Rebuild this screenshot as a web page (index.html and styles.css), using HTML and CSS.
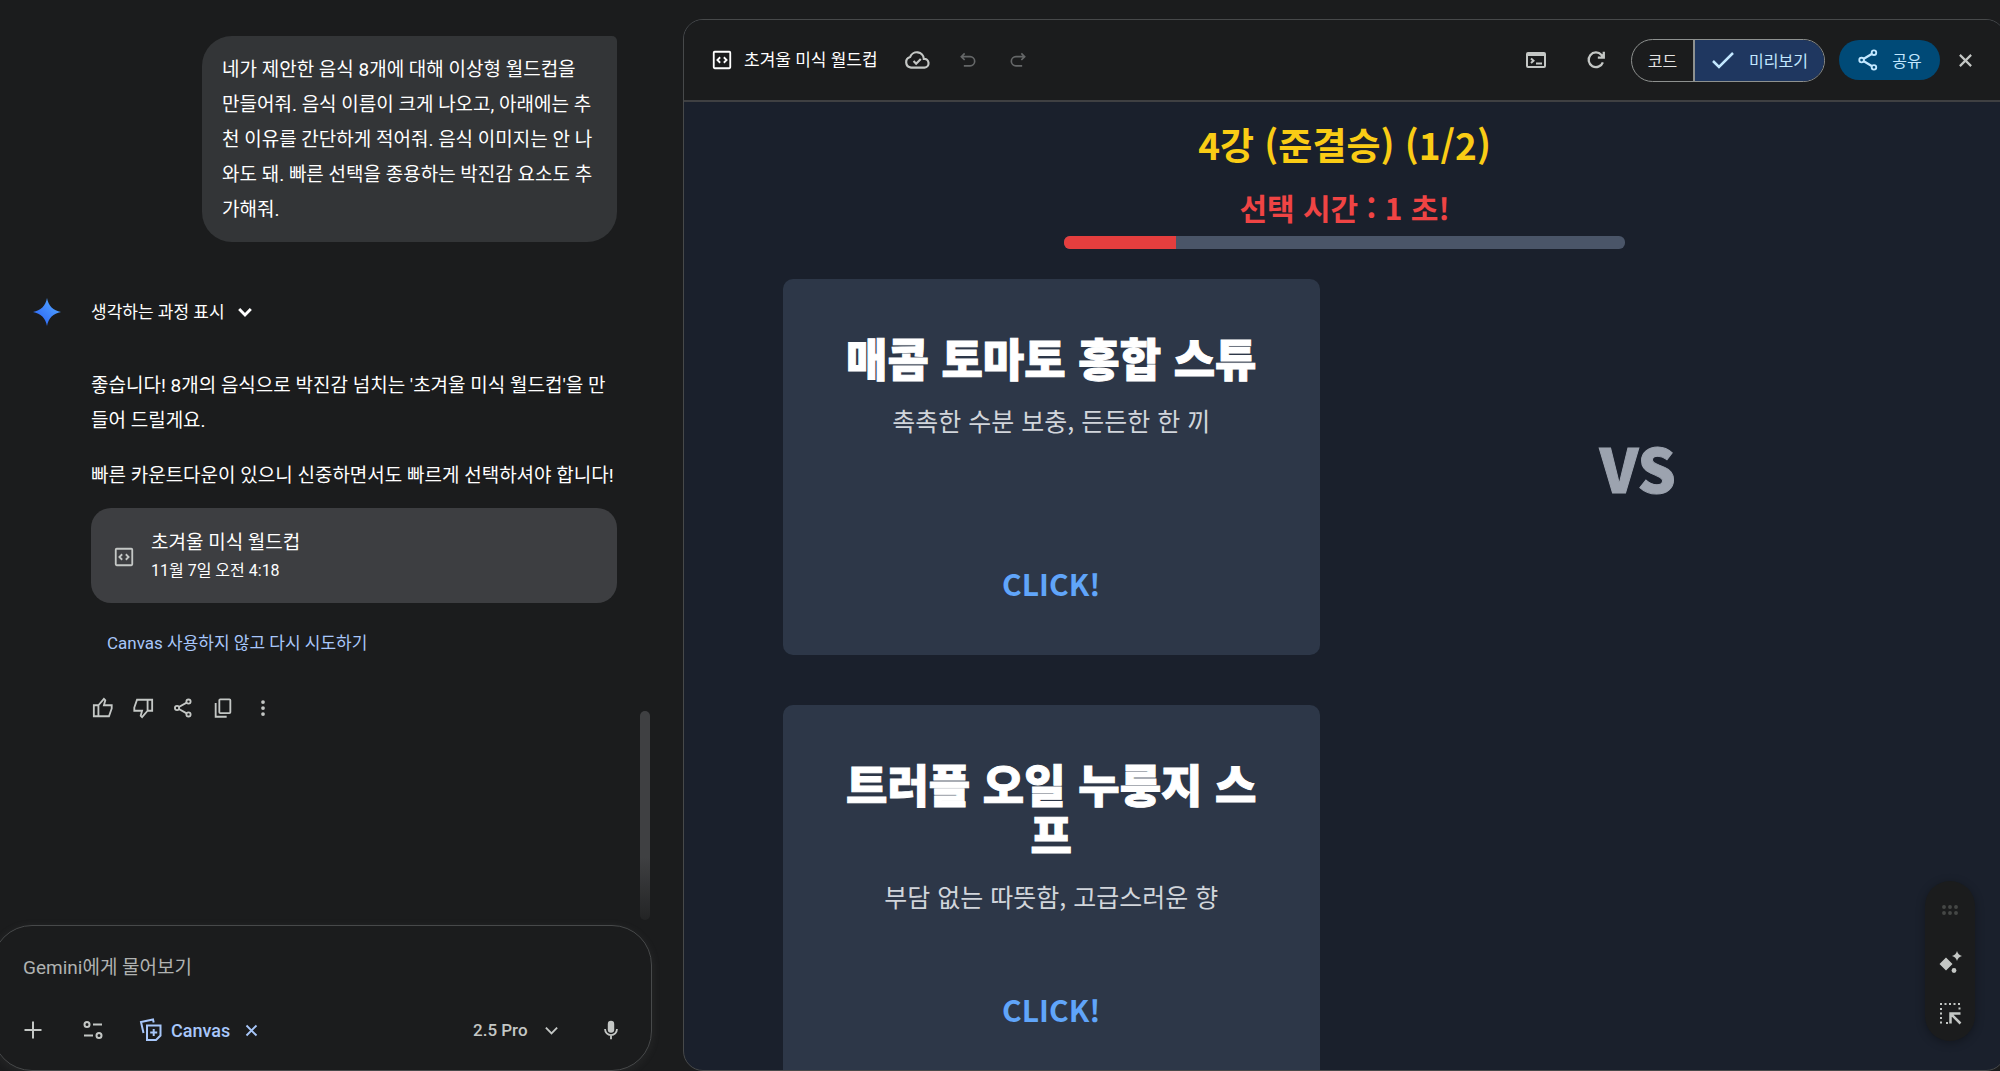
FILE: index.html
```html
<!DOCTYPE html>
<html lang="ko">
<head>
    <meta charset="UTF-8">
    <meta name="viewport" content="width=device-width, initial-scale=1.0">
    <title>초겨울 미식 월드컵</title>
    <link rel="stylesheet" href="styles.css">
</head>
<body>
    <main class="chat">
        <div class="messages">
            <p class="bubble">네가 제안한 음식 8개에 대해 이상형 월드컵을<br>만들어줘. 음식 이름이 크게 나오고, 아래에는 추<br>천 이유를 간단하게 적어줘. 음식 이미지는 안 나<br>와도 돼. 빠른 선택을 종용하는 박진감 요소도 추<br>가해줘.</p>
            <div class="answer">
                <svg class="star" viewBox="0 0 28 28">
                    <defs>
                        <linearGradient id="blue" x1="0" y1="1" x2="1" y2="0">
                            <stop offset="0.2" stop-color="#2f6bf6"/>
                            <stop offset="0.8" stop-color="#4f9fff"/>
                        </linearGradient>
                    </defs>
                    <path fill="url(#blue)" d="M14 0c1.300 7.700 6.300 12.700 14 14-7.700 1.300-12.700 6.300-14 14-1.300-7.700-6.300-12.700-14-14C7.700 12.700 12.700 7.700 14 0z"/>
                </svg>
                <div class="content">
                    <button class="thinking">생각하는 과정 표시
                        <svg class="icon" viewBox="0 0 24 24"><path stroke-width="3.500" d="M5 8.500l7 7 7-7"/></svg>
                    </button>
                    <p>좋습니다! 8개의 음식으로 박진감 넘치는 '초겨울 미식 월드컵'을 만<br>들어 드릴게요.</p>
                    <p>빠른 카운트다운이 있으니 신중하면서도 빠르게 선택하셔야 합니다!</p>
                    <button class="file">
                        <svg class="icon" viewBox="0 0 24 24"><rect x="3" y="3" width="18" height="18" rx="1"/><path d="M10 9l-3 3 3 3M14 9l3 3-3 3"/></svg>
                        <span>
                            <span class="file-name">초겨울 미식 월드컵</span>
                            <span class="file-date">11월 7일 오전 4:18</span>
                        </span>
                    </button>
                    <a class="retry" href="#">Canvas 사용하지 않고 다시 시도하기</a>
                    <div class="actions">
                        <button aria-label="좋아요"><svg class="icon" viewBox="0 0 24 24"><path d="M2 9h5v12H2zM7 9l6-7 1.500 1.500L13 9h8.500v3.500L18.500 21H7"/></svg></button>
                        <button aria-label="싫어요"><svg class="icon" viewBox="0 0 24 24"><path d="M22 15h-5V3h5zM17 15l-6 7-1.500-1.500L11 15H2.500v-3.500L5.500 3H17"/></svg></button>
                        <button aria-label="공유"><svg class="icon" viewBox="0 0 24 24"><circle cx="18" cy="5" r="2.300"/><circle cx="5.500" cy="12" r="2.300"/><circle cx="18" cy="19" r="2.300"/><path d="M7.500 10.900l8.500-4.800M7.500 13.100l8.500 4.800"/></svg></button>
                        <button aria-label="복사"><svg class="icon" viewBox="0 0 24 24"><rect x="8" y="2.500" width="12" height="15" rx="1"/><path d="M4 6.500v15h12"/></svg></button>
                        <button aria-label="더보기"><svg class="icon solid" viewBox="0 0 24 24"><circle cx="12" cy="4" r="2.500"/><circle cx="12" cy="12" r="2.500"/><circle cx="12" cy="20" r="2.500"/></svg></button>
                    </div>
                </div>
            </div>
            <div class="scrollbar"></div>
        </div>
        <form class="composer">
            <input class="prompt" type="text" aria-label="프롬프트" placeholder="Gemini에게 물어보기">
            <div class="tools">
                <button type="button" aria-label="추가"><svg class="icon big" viewBox="0 0 24 24"><path d="M12 3.500v17M3.500 12h17"/></svg></button>
                <button type="button" aria-label="도구"><svg class="icon big" viewBox="0 0 24 24"><circle cx="6" cy="6.500" r="2.500"/><path d="M12 6.500h9M3 17.500h9"/><circle cx="18" cy="17.500" r="2.500"/></svg></button>
                <button type="button" class="chip">
                    <svg class="icon big" viewBox="0 0 24 24"><path d="M4.500 15L2 4l12-2.500.7 3M8 7.500h13.500v10L17 22H8zM14.700 11v7M11.200 14.500h7"/></svg>
                    Canvas
                    <svg class="icon small" viewBox="0 0 24 24"><path stroke-width="3" d="M4 4l16 16M20 4L4 20"/></svg>
                </button>
                <label class="model">
                    <select aria-label="모델"><option>2.5 Pro</option></select>
                    <svg class="icon small" viewBox="0 0 24 24"><path stroke-width="3" d="M3 7.500l9 9 9-9"/></svg>
                </label>
                <button type="button" aria-label="마이크"><svg class="icon" viewBox="0 0 24 24"><rect x="8.500" y="2" width="7" height="13" rx="3.500" fill="currentColor" stroke="none"/><path d="M5.500 11a6.500 6.500 0 0 0 13 0M12 17v5"/></svg></button>
            </div>
        </form>
    </main>

    <section class="canvas">
        <header class="toolbar">
            <svg class="icon code" viewBox="0 0 24 24"><rect x="3" y="3" width="18" height="18" rx="1"/><path d="M10 9l-3 3 3 3M14 9l3 3-3 3"/></svg>
            <h2>초겨울 미식 월드컵</h2>
            <svg class="icon cloud" viewBox="0 0 24 24"><path d="M6.500 19A5 5 0 0 1 5.700 9.200 6.500 6.500 0 0 1 18.300 11 4 4 0 0 1 19 19zM8.800 13l2.400 2.400 4.300-4.300"/></svg>
            <button class="off" aria-label="실행 취소" disabled><svg class="icon" viewBox="0 0 24 24"><path d="M8 4L4 8l4 4M4 8h10.500a5.500 5.500 0 0 1 0 11H7"/></svg></button>
            <button class="off" aria-label="다시 실행" disabled><svg class="icon" viewBox="0 0 24 24"><path d="M16 4l4 4-4 4M20 8H9.500a5.500 5.500 0 0 0 0 11H17"/></svg></button>
            <div class="spacer"></div>
            <button aria-label="콘솔"><svg class="icon big" viewBox="0 0 24 24"><rect x="3" y="5" width="18" height="14" rx="1"/><path d="M3 7h18M7 10.500l2.500 2.300L7 15M12 15.500h6"/></svg></button>
            <button class="refresh" aria-label="새로고침"><svg class="icon" viewBox="0 0 24 24"><path stroke-width="2.500" d="M19.500 14.500A8 8 0 1 1 18 6.500l2 2.500M20.500 3v6.500H14"/></svg></button>
            <div class="tabs">
                <button>코드</button>
                <button class="active"><svg class="icon big" viewBox="0 0 24 24"><path stroke-width="2.500" d="M2 13l6 6L22 5"/></svg>미리보기</button>
            </div>
            <button class="share"><svg class="icon" viewBox="0 0 24 24"><circle cx="18.500" cy="4" r="2.500"/><circle cx="5" cy="12" r="2.500"/><circle cx="18.500" cy="20" r="2.500"/><path stroke-width="2.500" d="M7 10.900l9.500-5.600M7 13.100l9.500 5.600"/></svg>공유</button>
            <button class="close" aria-label="닫기"><svg class="icon small" viewBox="0 0 24 24"><path stroke-width="3.500" d="M3 3l18 18M21 3L3 21"/></svg></button>
        </header>
        <div class="game">
            <h1 class="round">4강 (준결승) (1/2)</h1>
            <p class="timer">선택 시간 : 1 초!</p>
            <div class="progress"><div class="progress-fill" style="width: 20%"></div></div>
            <div class="match">
                <button class="food">
                    <span class="food-name">매콤 토마토 홍합 스튜</span>
                    <span class="food-desc">촉촉한 수분 보충, 든든한 한 끼</span>
                    <span class="food-click">CLICK!</span>
                </button>
                <div class="vs">VS</div>
                <button class="food">
                    <span class="food-name">트러플 오일 누룽지 스프</span>
                    <span class="food-desc">부담 없는 따뜻함, 고급스러운 향</span>
                    <span class="food-click">CLICK!</span>
                </button>
            </div>
        </div>
        <div class="float-menu">
            <svg class="icon solid dots" viewBox="0 0 24 24"><circle cx="4" cy="8" r="2.600"/><circle cx="12" cy="8" r="2.600"/><circle cx="20" cy="8" r="2.600"/><circle cx="4" cy="16" r="2.600"/><circle cx="12" cy="16" r="2.600"/><circle cx="20" cy="16" r="2.600"/></svg>
            <button aria-label="Gemini 기능"><svg class="icon big solid" viewBox="0 0 24 24"><path d="M8 6.500l6.500 6.500L8 19.500 1.500 13zM19 0q1 4 5 5-4 1-5 5-1-4-5-5 4-1 5-5z"/><circle cx="16" cy="19.500" r="2.400"/></svg></button>
            <button aria-label="선택"><svg class="icon big" viewBox="0 0 24 24"><path stroke-dasharray="2 2.500" d="M2 3h20.500M3 7v16M8 22h2M21.500 6.500v4"/><path stroke-width="2.500" d="M12.500 22.500V12.500h10M13 13l9.500 9.500"/></svg></button>
        </div>
    </section>
</body>
</html>
```
FILE: styles.css
```css
* {
    margin: 0;
    padding: 0;
    box-sizing: border-box;
}
body {
    display: flex;
    height: 100vh;
    overflow: hidden;
    background-color: #1b1c1d;
    color: #ffffff;
    font-family: Roboto, "Noto Sans CJK KR", sans-serif;
    font-size: 19px;
    line-height: 35px;
}
button {
    display: flex;
    align-items: center;
    justify-content: center;
    border: none;
    background: none;
    color: #c4c7c5;
    font: inherit;
    cursor: pointer;
}
.icon {
    flex: none;
    width: 22px;
    height: 22px;
    fill: none;
    stroke: currentColor;
    stroke-width: 2;
}
.icon.big {
    width: 24px;
    height: 24px;
}
.icon.small {
    width: 15px;
    height: 15px;
}
.icon.solid {
    fill: currentColor;
    stroke: none;
}

/* chat */
.chat {
    display: flex;
    flex-direction: column;
    flex: none;
    width: 683px;
}
.messages {
    position: relative;
    flex: 1;
    padding: 36px 66px 0 33px;
}
.bubble {
    width: 415px;
    margin-left: auto;
    padding: 16px 20px 15px;
    border-radius: 30px 5px 30px 30px;
    background-color: #333537;
    white-space: nowrap;
}
.answer {
    display: flex;
    gap: 30px;
    margin-top: 50px;
}
.star {
    flex: none;
    width: 28px;
    height: 28px;
    margin-top: 6px;
}
.content {
    flex: 1;
    white-space: nowrap;
}
.thinking {
    gap: 10px;
    height: 40px;
    margin-bottom: 36px;
    color: #ffffff;
    font-size: 17px;
}
.thinking .icon {
    width: 20px;
    height: 20px;
}
.content p + p {
    margin-top: 20px;
}
.file {
    justify-content: flex-start;
    gap: 16px;
    width: 100%;
    height: 95px;
    margin-top: 15px;
    padding: 2px 22px 0;
    border-radius: 20px;
    background-color: #3d3e41;
    text-align: left;
}
.file-name,
.file-date {
    display: block;
    color: #ffffff;
    line-height: 28px;
}
.file-date {
    font-size: 16px;
}
.retry {
    display: block;
    margin-top: 20px;
    padding-left: 16px;
    color: #a8c7fa;
    font-size: 17px;
    line-height: 40px;
    text-decoration: none;
}
.actions {
    display: flex;
    margin: 25px 0 0 -8px;
}
.actions button {
    width: 40px;
    height: 40px;
}
.actions .solid {
    width: 18px;
    height: 18px;
}
.scrollbar {
    position: absolute;
    right: 33px;
    bottom: 5px;
    width: 10px;
    height: 209px;
    border-radius: 5px;
    background: linear-gradient(#3f4042 70%, #232425);
}
.composer {
    height: 146px;
    margin: 0 31px 0 -8px;
    padding: 23px 20px 0 30px;
    border: 1px solid #47494a;
    border-radius: 40px;
    box-shadow: 0 2px 10px rgba(150, 150, 150, 0.1);
}
.prompt {
    display: block;
    width: 100%;
    height: 36px;
    border: none;
    outline: none;
    background: none;
    color: #ffffff;
    font: inherit;
}
.prompt::placeholder {
    color: #b0b2b1;
}
.tools {
    display: flex;
    align-items: center;
    height: 40px;
    margin: 25px 0 0 -10px;
}
.tools button {
    width: 40px;
    height: 40px;
}
.tools button + button {
    margin-left: 20px;
}
.tools .chip {
    gap: 8px;
    width: auto;
    padding-left: 6px;
    color: #a8c7fa;
    font-size: 18px;
    font-weight: 500;
}
.chip .small {
    margin-left: 6px;
}
.model {
    display: flex;
    align-items: center;
    gap: 16px;
    margin: 0 32px 0 auto;
    color: #c4c7c5;
}
.model select {
    appearance: none;
    border: none;
    outline: none;
    background: none;
    color: #c4c7c5;
    font: inherit;
    font-size: 17px;
    font-weight: 500;
}

/* canvas */
.canvas {
    position: relative;
    display: flex;
    flex-direction: column;
    flex: 1;
    margin: 19px -6px 0 0;
    border: 1px solid #47494a;
    border-radius: 20px;
    overflow: hidden;
    background-color: #1a202c;
    font-family: "Noto Sans CJK KR", sans-serif;
}
.toolbar {
    display: flex;
    align-items: center;
    flex: none;
    height: 82px;
    padding: 0 20px 0 27px;
    border-bottom: 2px solid #3f4042;
    background-color: #1b1c1d;
    color: #c4c7c5;
    font-size: 16px;
}
.toolbar h2 {
    margin: 0 26px 0 11px;
    color: #ffffff;
    font-family: Roboto, "Noto Sans CJK KR", sans-serif;
    font-size: 17px;
    font-weight: 400;
}
.toolbar .code {
    color: #ffffff;
}
.toolbar .cloud {
    width: 26px;
    height: 26px;
}
.toolbar > button {
    width: 40px;
    height: 40px;
}
.toolbar .off {
    margin-left: 18px;
    color: #656768;
}
.toolbar .off + .off {
    margin-left: 10px;
}
.off .icon {
    width: 20px;
    height: 20px;
}
.spacer {
    flex: 1;
}
.toolbar .refresh {
    margin: 0 15px 0 20px;
}
.tabs {
    display: flex;
    height: 43px;
    border: 1px solid #8e918f;
    border-radius: 22px;
    overflow: hidden;
}
.tabs button {
    padding: 0 16px;
    color: #e3e3e3;
}
.tabs .active {
    gap: 14px;
    border-left: 2px solid #8e918f;
    background-color: #1f3760;
    color: #c2e7ff;
}
.toolbar .share {
    gap: 13px;
    width: 101px;
    margin-left: 14px;
    border-radius: 20px;
    background-color: #004a77;
    color: #c2e7ff;
}
.toolbar .close {
    margin-left: 5px;
}
.game {
    display: flex;
    flex-direction: column;
    align-items: center;
    padding: 20px 99px 0;
}
.round {
    color: #facc15;
    font-size: 37px;
    font-weight: 700;
    line-height: 45px;
}
.timer {
    margin-top: 20px;
    color: #ef4444;
    font-size: 30px;
    font-weight: 700;
    line-height: 40px;
}
.progress {
    width: 50%;
    height: 13px;
    margin-top: 9px;
    border-radius: 6px;
    overflow: hidden;
    background-color: #4a5568;
}
.progress-fill {
    height: 100%;
    background-color: #e53e3e;
}
.match {
    display: grid;
    grid-template-columns: 1fr 1fr;
    grid-auto-rows: 376px;
    gap: 50px;
    width: 100%;
    margin-top: 30px;
}
.food {
    flex-direction: column;
    padding: 54px 50px 52px;
    border-radius: 10px;
    background-color: #2d3748;
    text-align: center;
}
.food-name {
    color: #ffffff;
    font-size: 45px;
    font-weight: 900;
    line-height: 50px;
    -webkit-text-stroke: 1px #ffffff;
}
.food-desc {
    margin-top: 20px;
    color: #d1d5db;
    font-size: 25px;
}
.food-click {
    margin-top: auto;
    color: #60a5fa;
    font-size: 30px;
    font-weight: 700;
    line-height: 40px;
}
.vs {
    align-self: center;
    color: #9ca3af;
    font-size: 60px;
    font-weight: 900;
    line-height: 60px;
    text-align: center;
    -webkit-text-stroke: 1px #9ca3af;
}
.float-menu {
    position: absolute;
    right: 30px;
    bottom: 29px;
    display: flex;
    flex-direction: column;
    align-items: center;
    width: 50px;
    padding: 20px 0 8px;
    border-radius: 25px;
    background-color: #1b1c1d;
    box-shadow: 0 2px 10px rgba(0, 0, 0, 0.3);
}
.float-menu button {
    width: 40px;
    height: 40px;
}
.float-menu .dots {
    width: 18px;
    height: 18px;
    margin-bottom: 24px;
    color: #454746;
}
.float-menu button + button {
    margin-top: 10px;
}
```
